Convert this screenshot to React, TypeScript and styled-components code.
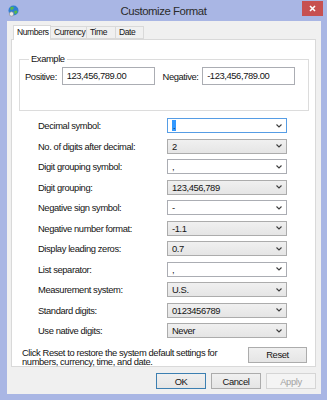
import { createGlobalStyle } from 'styled-components';
import styled from 'styled-components';

const GlobalStyle = createGlobalStyle`
  html, body { margin: 0; padding: 0; background: #a9b6e4; }
  body { font-family: "Liberation Sans", Arial, sans-serif; }
`;

const Window = styled.div`
  width: 327px;
  height: 400px;
  box-sizing: border-box;
  background: #a9b6e4;
  display: flex;
  flex-direction: column;
  padding: 0 6px 6px 7px;
  color: #141414;
  font-size: 9.4px;
  letter-spacing: -0.4px;
`;

const TitleBar = styled.div`
  height: 22px;
  margin: 0 -6px 0 -7px;
  display: grid;
  grid-template-columns: 1fr auto 1fr;
  align-items: start;
`;

const AppIcon = styled.svg`
  margin: 5px 0 0 8px;
  justify-self: start;
`;

const Title = styled.div`
  padding-top: 5px;
  font-size: 11.4px;
  letter-spacing: -0.45px;
  color: #2b2b2b;
`;

const CloseButton = styled.div`
  justify-self: end;
  margin: 1px 4px 0 0;
  width: 21px;
  height: 15px;
  background: #c75050;
  display: flex;
  align-items: center;
  justify-content: center;
`;

const Client = styled.div`
  flex: 1;
  background: #f0f0f0;
  padding: 4px 5px 5px 4px;
  display: flex;
  flex-direction: column;
`;

const TabStrip = styled.div`
  display: flex;
  align-items: flex-end;
  height: 14px;
  padding-left: 2px;
  position: relative;
  z-index: 1;
`;

const Tab = styled.div<{ $active?: boolean; $w: number }>`
  width: ${({ $w }) => $w}px;
  box-sizing: border-box;
  height: ${({ $active }) => ($active ? 15 : 13)}px;
  margin-bottom: ${({ $active }) => ($active ? -1 : 0)}px;
  border: 1px solid #d9d9d9;
  border-bottom: ${({ $active }) => ($active ? 'none' : '1px solid #d9d9d9')};
  background: ${({ $active }) => ($active ? '#ffffff' : '#f0f0f0')};
  margin-right: -1px;
  padding-left: 3px;
  font-size: 8.5px;
  line-height: ${({ $active }) => ($active ? 13 : 11)}px;
`;

const Panel = styled.div`
  height: 328px;
  box-sizing: border-box;
  background: #fff;
  border: 1px solid #d9d9d9;
  padding: 14px 6px 0 7px;
  display: flex;
  flex-direction: column;
`;

const GroupBox = styled.fieldset`
  margin: 0;
  flex-shrink: 0;
  height: 57px;
  box-sizing: border-box;
  border: 1px solid #dcdcdc;
  padding: 0 5px;
  min-width: 0;
`;

const Legend = styled.legend`
  padding: 0 2px;
  margin-left: 4px;
  line-height: 10px;
`;

const ExampleRow = styled.div`
  display: flex;
  align-items: center;
  margin-top: 3px;
`;

const ExampleLabel = styled.span<{ $w: number }>`
  width: ${({ $w }) => $w}px;
`;

const TextBox = styled.div`
  width: 96px;
  height: 18px;
  box-sizing: border-box;
  border: 1px solid #abadb3;
  padding: 1px 0 0 4px;
  line-height: 13px;
  margin-right: 8px;
`;

const Rows = styled.div`
  flex-shrink: 0;
  margin-top: 7px;
  display: grid;
  grid-auto-rows: 20.5px;
  padding-left: 19px;
`;

const Row = styled.div`
  display: grid;
  grid-template-columns: 129px 120px;
  align-items: start;
`;

const RowLabel = styled.span`
  line-height: 15px;
`;

const Dropdown = styled.div<{ $editable?: boolean; $focused?: boolean }>`
  height: 15px;
  box-sizing: border-box;
  border: 1px solid
    ${({ $editable, $focused }) => ($focused ? '#569de5' : $editable ? '#abadb3' : '#acacac')};
  background: ${({ $editable }) =>
    $editable ? '#ffffff' : 'linear-gradient(#f0f0f0, #e5e5e5)'};
  display: flex;
  align-items: center;
  justify-content: space-between;
  padding: 0 4px 0 4px;
  line-height: 13px;
`;

const Selected = styled.span`
  background: #3399ff;
  color: #1e1e1e;
  padding: 0 1px;
  line-height: 11px;
`;

const Footer = styled.div`
  margin-top: 3px;
  display: flex;
  justify-content: space-between;
  align-items: flex-start;
  padding: 0 2px 0 3px;
`;

const FooterText = styled.p`
  margin: 1px 0 0;
  line-height: 9.5px;
`;

const Button = styled.div<{ $w?: number; $default?: boolean; $disabled?: boolean }>`
  width: ${({ $w }) => $w ?? 50}px;
  height: 16px;
  box-sizing: border-box;
  border: 1px solid
    ${({ $default, $disabled }) => ($default ? '#3c7fb1' : $disabled ? '#d5d5d5' : '#acacac')};
  background: ${({ $disabled }) => ($disabled ? '#f4f4f4' : 'linear-gradient(#f0f0f0, #e5e5e5)')};
  color: ${({ $disabled }) => ($disabled ? '#a3a3a3' : '#141414')};
  display: flex;
  align-items: center;
  justify-content: center;
  flex-shrink: 0;
`;

const ButtonBar = styled.div`
  margin-top: 6px;
  display: flex;
  justify-content: flex-end;
  gap: 5px;
`;

const Chevron = () => (
  <svg width="6" height="4" viewBox="0 0 6 4">
    <polyline points="0.5,0.5 3,3 5.5,0.5" fill="none" stroke="#3d3d3d" strokeWidth="1.1" />
  </svg>
);

type Setting = { label: string; value: string; editable?: boolean; focused?: boolean };

const SETTINGS: Setting[] = [
  { label: 'Decimal symbol:', value: '.', editable: true, focused: true },
  { label: 'No. of digits after decimal:', value: '2' },
  { label: 'Digit grouping symbol:', value: ',', editable: true },
  { label: 'Digit grouping:', value: '123,456,789' },
  { label: 'Negative sign symbol:', value: '-', editable: true },
  { label: 'Negative number format:', value: '-1.1' },
  { label: 'Display leading zeros:', value: '0.7' },
  { label: 'List separator:', value: ',', editable: true },
  { label: 'Measurement system:', value: 'U.S.' },
  { label: 'Standard digits:', value: '0123456789' },
  { label: 'Use native digits:', value: 'Never' },
];

const TABS = [
  { label: 'Numbers', w: 38 },
  { label: 'Currency', w: 37 },
  { label: 'Time', w: 30 },
  { label: 'Date', w: 29 },
];

export default function App() {
  return (
    <>
      <GlobalStyle />
      <Window>
        <TitleBar>
          <AppIcon width="11" height="12" viewBox="0 0 11 12">
            <circle cx="5.5" cy="5.5" r="5" fill="#2f7fd3" />
            <path d="M2 3 C3 1.5 5 1.5 6 2.5 L5 4.5 L3 5 Z" fill="#58b947" />
            <path d="M6 6 L9 5.5 L9.5 7.5 L7 9.5 Z" fill="#58b947" />
            <circle cx="3.5" cy="9" r="2.2" fill="#e8e8e8" stroke="#8a8a8a" strokeWidth="0.6" />
          </AppIcon>
          <Title>Customize Format</Title>
          <CloseButton>
            <svg width="7" height="7" viewBox="0 0 7 7">
              <path d="M1 1 L6 6 M6 1 L1 6" stroke="#fff" strokeWidth="1.6" />
            </svg>
          </CloseButton>
        </TitleBar>
        <Client>
          <TabStrip>
            {TABS.map((t, i) => (
              <Tab key={t.label} $active={i === 0} $w={t.w}>
                {t.label}
              </Tab>
            ))}
          </TabStrip>
          <Panel>
            <GroupBox>
              <Legend>Example</Legend>
              <ExampleRow>
                <ExampleLabel $w={38}>Positive:</ExampleLabel>
                <TextBox>123,456,789.00</TextBox>
                <ExampleLabel $w={41}>Negative:</ExampleLabel>
                <TextBox>-123,456,789.00</TextBox>
              </ExampleRow>
            </GroupBox>
            <Rows>
              {SETTINGS.map((s) => (
                <Row key={s.label}>
                  <RowLabel>{s.label}</RowLabel>
                  <Dropdown $editable={s.editable} $focused={s.focused}>
                    {s.focused ? <Selected>{s.value}</Selected> : <span>{s.value}</span>}
                    <Chevron />
                  </Dropdown>
                </Row>
              ))}
            </Rows>
            <Footer>
              <FooterText>
                Click Reset to restore the system default settings for
                <br />
                numbers, currency, time, and date.
              </FooterText>
              <Button $w={59}>Reset</Button>
            </Footer>
          </Panel>
          <ButtonBar>
            <Button $default>OK</Button>
            <Button>Cancel</Button>
            <Button $disabled>Apply</Button>
          </ButtonBar>
        </Client>
      </Window>
    </>
  );
}
